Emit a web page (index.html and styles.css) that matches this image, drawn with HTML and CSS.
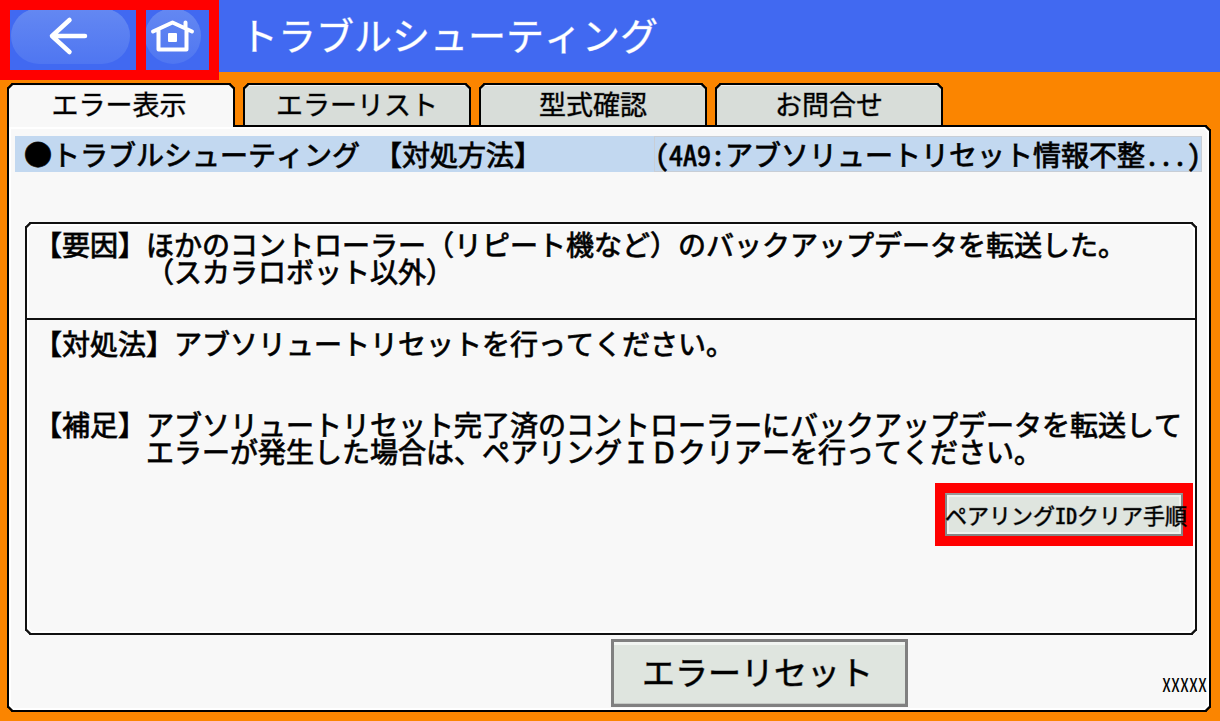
FILE: index.html
```html
<!DOCTYPE html>
<html lang="ja">
<head>
<meta charset="utf-8">
<title>トラブルシューティング</title>
<link rel="stylesheet" href="styles.css">
</head>
<body>
<header class="header">
  <nav class="nav">
    <button class="nav-button" type="button" aria-label="戻る">
      <svg width="126" height="60" viewBox="0 0 126 60">
        <defs>
          <linearGradient id="shine" x1="0" y1="0" x2="0" y2="1">
            <stop offset="0" stop-color="#6488f2"/>
            <stop offset="1" stop-color="#4f76f1"/>
          </linearGradient>
        </defs>
        <rect x="1" y="-2" width="119" height="56" rx="28" fill="url(#shine)"/>
        <path d="M59.500 10L42 26L59.500 42M42 26H75" fill="none" stroke="#fff" stroke-width="4.500" stroke-linecap="round" stroke-linejoin="round"/>
      </svg>
    </button>
    <button class="nav-button" type="button" aria-label="ホーム">
      <svg width="63" height="60" viewBox="0 0 63 60">
        <circle cx="27" cy="26" r="28" fill="url(#shine)"/>
        <path d="M7 21.500L26.500 12.500L46 21.500M39.500 18V12.500M12.500 20V39.500H40.500V20" fill="none" stroke="#fff" stroke-width="4" stroke-linecap="round" stroke-linejoin="round"/>
        <rect x="22" y="23" width="9" height="9" rx="1" fill="#fff"/>
      </svg>
    </button>
  </nav>
  <h1 class="title">トラブルシューティング</h1>
</header>
<main class="main">
  <div class="tabs" role="tablist">
    <button class="tab tab-active" type="button" role="tab" aria-selected="true">エラー表示</button>
    <button class="tab" type="button" role="tab" aria-selected="false">エラーリスト</button>
    <button class="tab" type="button" role="tab" aria-selected="false">型式確認</button>
    <button class="tab" type="button" role="tab" aria-selected="false">お問合せ</button>
  </div>
  <section class="panel" role="tabpanel">
    <div class="headline">
      <h2 class="headline-title">●トラブルシューティング 【対処方法】</h2>
      <p class="headline-error">(4A9:アブソリュートリセット情報不整...)</p>
    </div>
    <div class="details">
      <dl class="cause">
        <div class="entry">
          <dt>【要因】</dt>
          <dd>ほかのコントローラー（リピート機など）のバックアップデータを転送した。<br>（スカラロボット以外）</dd>
        </div>
      </dl>
      <div class="remedy">
        <dl class="remedy-list">
          <div class="entry">
            <dt>【対処法】</dt>
            <dd>アブソリュートリセットを行ってください。</dd>
          </div>
          <div class="entry">
            <dt>【補足】</dt>
            <dd>アブソリュートリセット完了済のコントローラーにバックアップデータを転送して<br>エラーが発生した場合は、ペアリングＩＤクリアーを行ってください。</dd>
          </div>
        </dl>
        <div class="highlight">
          <button class="pairing" type="button">ペアリングIDクリア手順</button>
        </div>
      </div>
    </div>
    <div class="footer">
      <button class="reset" type="button">エラーリセット</button>
      <span class="code">XXXXX</span>
    </div>
  </section>
</main>
</body>
</html>
```
FILE: styles.css
```css
* {
  box-sizing: border-box;
  margin: 0;
  padding: 0;
}

body {
  display: flex;
  flex-direction: column;
  min-height: 100vh;
  background: #fb8500;
  color: #000;
  font-family: "Noto Sans Mono CJK JP", "Noto Sans CJK JP", sans-serif;
  text-spacing-trim: space-all;
}

button {
  font-family: inherit;
  color: inherit;
  border: 0;
  cursor: pointer;
}

.header {
  display: flex;
  height: 72px;
  background: #4169f1;
}

.nav {
  display: flex;
  gap: 10px;
  height: 80px;
  padding: 10px;
  background: #f00;
}

.nav-button {
  background: #4169f1;
}

.nav-button svg {
  display: block;
}

.title {
  padding-left: 21px;
  color: #fff;
  font-size: 38px;
  font-weight: 400;
  line-height: 68px;
  white-space: nowrap;
  -webkit-text-stroke: 1px rgba(255, 255, 255, 0.4);
}

.main {
  display: flex;
  flex: 1;
  flex-direction: column;
  padding: 11px 9px 9px 7px;
}

.tabs {
  display: flex;
  gap: 8px;
}

.tab {
  flex: 0 1 228px;
  height: 42px;
  padding-bottom: 2px;
  background: #d8ddd9;
  border: 2px solid #000;
  border-bottom: 0;
  border-radius: 5px 5px 0 0;
  corner-shape: bevel;
  font-size: 27px;
  line-height: 36px;
  white-space: nowrap;
  box-shadow: inset 0 1px #f2f2f2;
  -webkit-text-stroke: 1px rgba(0, 0, 0, 0.4);
}

.tab-active {
  z-index: 1;
  height: 44px;
  margin-bottom: -2px;
  padding: 0 4px 4px 0;
  background: #f8f8f8;
}

.panel {
  display: flex;
  flex: 1;
  flex-direction: column;
  padding: 9px 0 3px;
  background: #f8f8f8;
  border: 2px solid #000;
  border-radius: 0 5px 5px 5px;
  corner-shape: bevel;
  box-shadow: inset 0 0 0 2px #fff;
}

.headline {
  display: flex;
  justify-content: space-between;
  margin: 0 7px 0 6px;
  background: #c2d8f0;
  font-size: 28px;
  line-height: 34px;
  white-space: nowrap;
  -webkit-text-stroke: 1px rgba(0, 0, 0, 0.8);
}

.headline-title {
  padding: 1px 0 1px 9px;
  font-size: 28px;
  font-weight: 400;
}

.headline-error {
  border: 1px solid #c8ced6;
}

.details {
  display: flex;
  flex: 1;
  flex-direction: column;
  margin: 50px 12px 0 16px;
  border: 2px solid #111;
  border-radius: 5px;
  corner-shape: bevel;
  box-shadow: inset 0 0 0 2px #fff;
  font-size: 28px;
  line-height: 27px;
  -webkit-text-stroke: 1px rgba(0, 0, 0, 0.8);
}

.cause {
  min-height: 96px;
  padding: 7px 0 8px 7px;
  border-bottom: 2px solid #111;
}

.remedy {
  display: flex;
  flex: 1;
  flex-direction: column;
  gap: 18px;
  padding: 10px 2px 10px 7px;
}

.remedy-list {
  display: flex;
  flex-direction: column;
  gap: 54px;
}

.entry {
  display: flex;
}

.entry dt {
  flex: none;
}

.highlight {
  align-self: flex-end;
  padding: 10px;
  background: #f00;
}

.pairing {
  display: block;
  width: 238px;
  height: 43px;
  background: #dfe5df;
  border: 2px solid #868686;
  border-top-color: #999;
  box-shadow: inset 0 0 0 2px #eef2ee;
  font-size: 22px;
  line-height: 39px;
  text-indent: -2px;
  text-align: left;
  white-space: nowrap;
  -webkit-text-stroke: 1px rgba(0, 0, 0, 0.5);
}

.footer {
  display: grid;
  grid-template-columns: 2fr auto 1fr;
  margin-top: 4px;
}

.reset {
  grid-column: 2;
  width: 297px;
  height: 68px;
  padding: 0 4px 4px 0;
  background: #dfe5df;
  border: 3px solid #808080;
  box-shadow: inset 0 3px #f2f5f2, inset 0 -1px #c4c8c4;
  font-size: 33px;
  line-height: 58px;
  -webkit-text-stroke: 1px rgba(0, 0, 0, 0.5);
}

.code {
  align-self: center;
  justify-self: end;
  padding: 22px 2px 0 0;
  font-size: 18px;
  line-height: 22px;
}
```
